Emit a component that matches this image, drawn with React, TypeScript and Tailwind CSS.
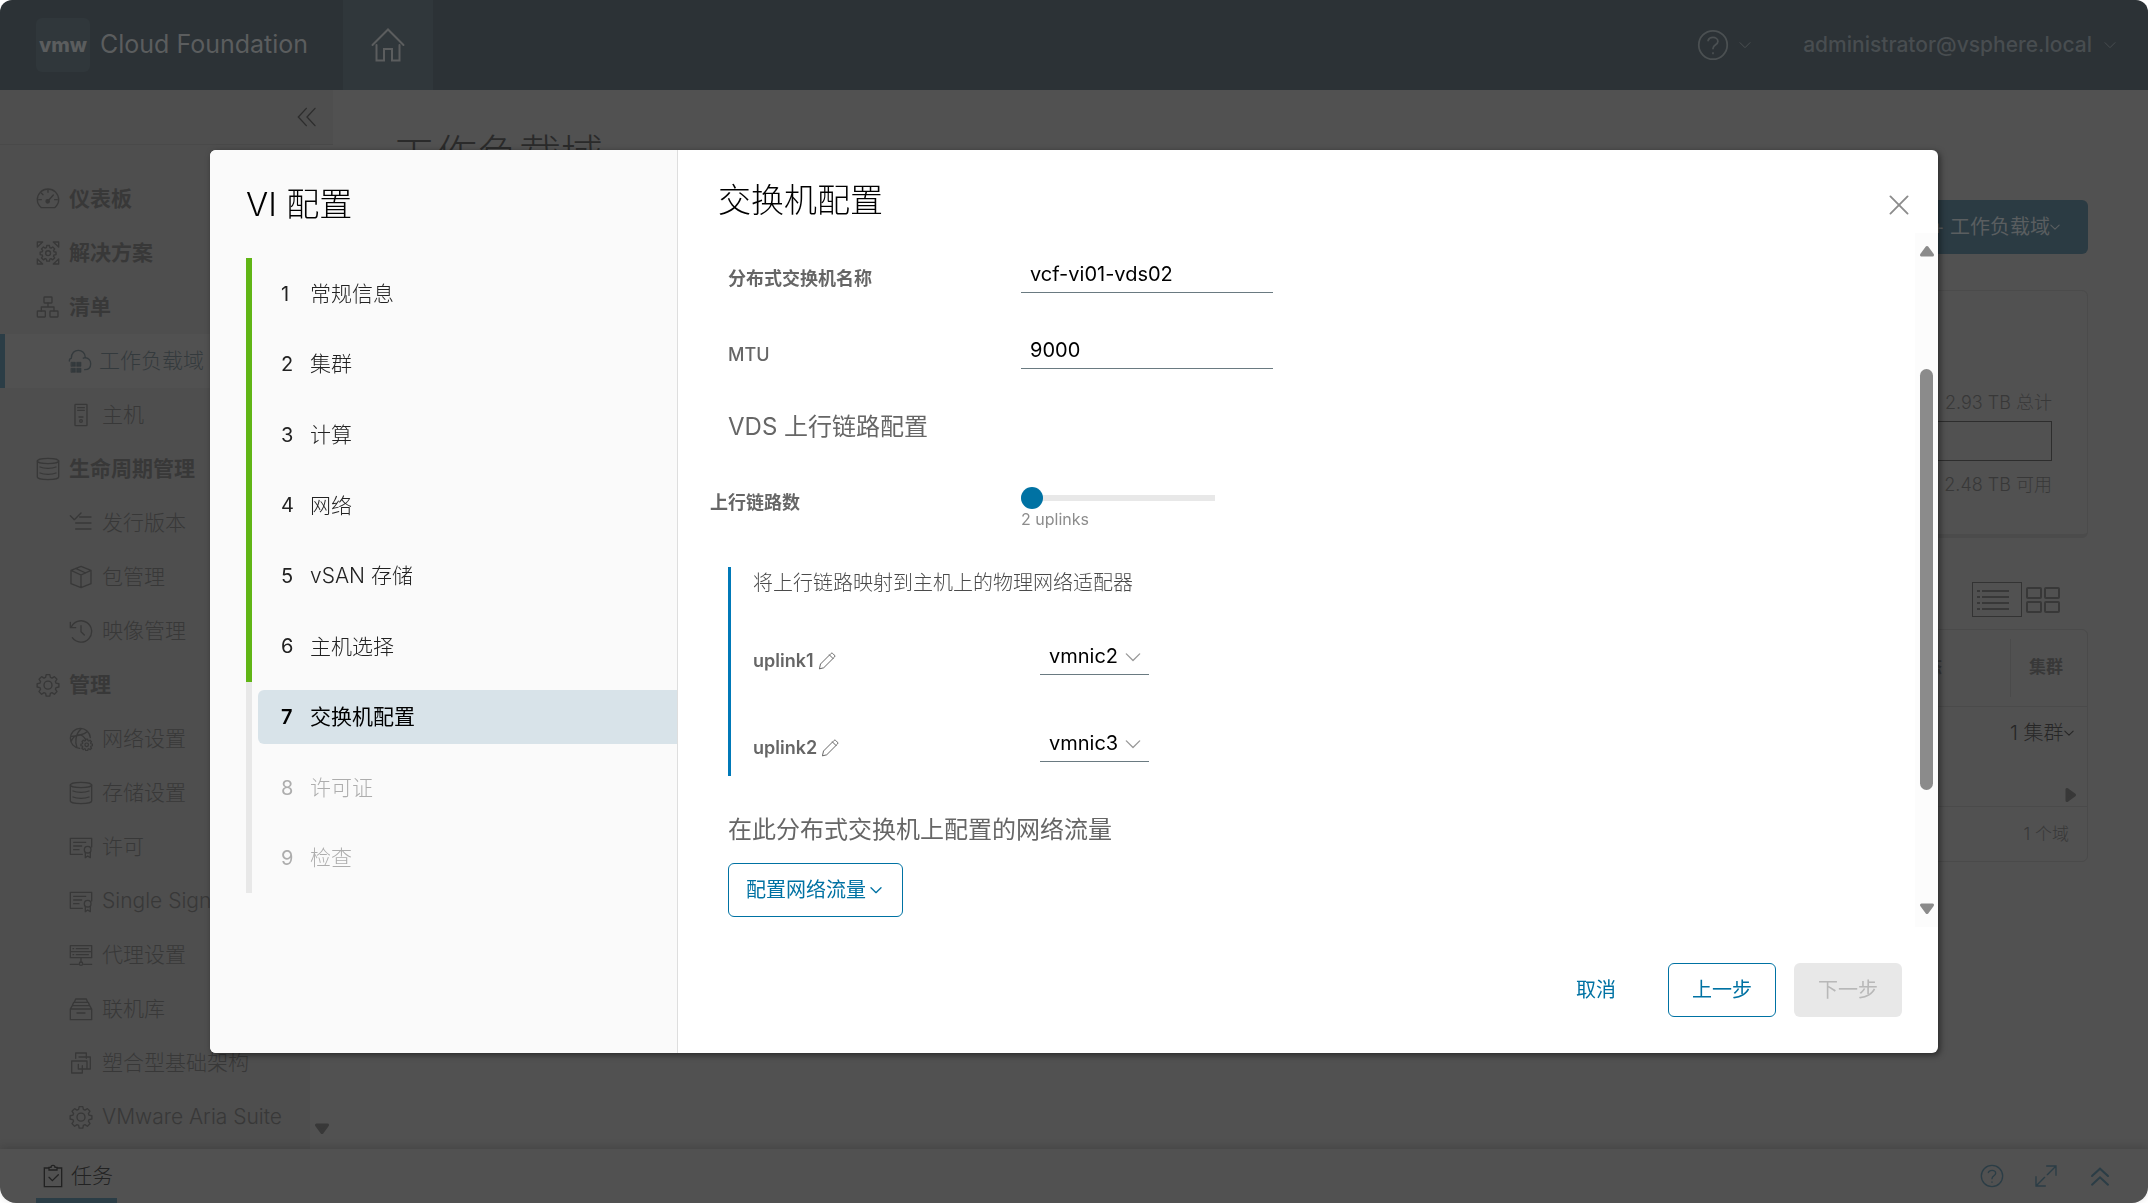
import { ReactNode, useState } from "react";

type IconProps = { className?: string; children?: ReactNode; w?: number };

/* Line icon on a 36-unit grid */
function Icon({ className = "size-6", children, w = 2 }: IconProps) {
  return (
    <svg
      viewBox="0 0 36 36"
      className={"shrink-0 " + className}
      fill="none"
      stroke="currentColor"
      strokeWidth={w}
      strokeLinejoin="round"
      strokeLinecap="round"
      aria-hidden="true"
    >
      {children}
    </svg>
  );
}

const GEAR =
  "M15.3 2.5h5.4l.9 4.2 2.4 1 3.6-2.3 3.9 3.9-2.4 3.6 1 2.4 4.2.8v4.9l-4.2.9-1 2.4 2.4 3.6-3.9 3.9-3.6-2.4-2.4 1-.9 4.2h-5.4l-.9-4.2-2.4-1-3.6 2.4-3.9-3.9 2.4-3.6-1-2.4-4.2-.9v-4.9l4.2-.8 1-2.4-2.4-3.6 3.9-3.9 3.6 2.3 2.4-1z";

function GearIcon({ className }: { className?: string }) {
  return (
    <Icon className={className}>
      <path d={GEAR} />
      <circle cx="18" cy="18.2" r="6" />
    </Icon>
  );
}

function GaugeIcon() {
  return (
    <Icon>
      <path d="M8 31C4.500 28 2 24 2 19a16 16 0 0 1 32 0c0 5-2.500 9-6 12z" />
      <path d="M18 4v4M4 19h4M28 19h4M8 9l2.500 2.500M18 21l8-9" />
      <circle cx="17.500" cy="21.500" r="2.500" fill="currentColor" />
    </Icon>
  );
}

function SolutionIcon() {
  return (
    <Icon>
      <path d="M2 9V1.500h8zM34 9V1.500h-8zM2 27v7.500h8zM34 27v7.500h-8z" />
      <g transform="translate(5 5) scale(.73)">
        <path d={GEAR} strokeWidth="2.800" />
        <circle cx="18" cy="18.200" r="5" strokeWidth="2.800" />
      </g>
    </Icon>
  );
}

function TreeIcon() {
  return (
    <Icon>
      <rect x="12" y="3" width="12" height="9" rx="1" />
      <rect x="2" y="24" width="12" height="9" rx="1" />
      <rect x="21" y="24" width="12" height="9" rx="1" />
      <path d="M18 12v6M8 24v-6h19v6" />
    </Icon>
  );
}

function CloudDomainIcon() {
  return (
    <Icon>
      <path d="M2 18c0-3 2-4 3-4C5 6 10 2 15.500 2S26 6 26 13c5 1 8 4 8 9s-3 9-9 9" />
      <path d="M26 13c-1 0-2 .3-3 .8" />
      <path
        d="M5 20h6v6H5zM13.500 20h6v6h-6zM5 29h6v6H5zM13.500 29h6v6h-6z"
        fill="currentColor"
        strokeWidth="1"
      />
    </Icon>
  );
}

function HostIcon() {
  return (
    <Icon>
      <rect x="9" y="2" width="18" height="32" rx="1" />
      <path d="M13 7h10M13 11h10M15 21h6" />
      <circle cx="18" cy="27" r="2" />
    </Icon>
  );
}

function DatabaseIcon() {
  return (
    <Icon>
      <ellipse cx="18" cy="6" rx="16" ry="4" />
      <path d="M2 6v24c0 2.200 7 4 16 4s16-1.800 16-4V6" />
      <path d="M6 15c3 1.300 7 2 12 2s9-.7 12-2M6 24c3 1.300 7 2 12 2s9-.7 12-2" />
    </Icon>
  );
}

function ReleaseIcon() {
  return (
    <Icon>
      <path d="M2 7l6 6L18 3M16 9h17M10 18h23M10 27h23" />
    </Icon>
  );
}

function BoxIcon() {
  return (
    <Icon>
      <path d="M18 2l15 6v20l-15 6-15-6V8zM3 8l15 7 15-7M18 15v19M10 5l15 7" />
    </Icon>
  );
}

function HistoryIcon() {
  return (
    <Icon>
      <path d="M2 5v8h8M3 13A16 16 0 1 1 5 28M18 10v9l5 5" />
    </Icon>
  );
}

function NetworkGearIcon() {
  return (
    <Icon>
      <path d="M16 32A15 15 0 1 1 32 16M12 31c-3-7-3-20 6-28M3 14c8 0 20-3 24-7M3 22c5-12 16-14 22-3" />
      <g transform="translate(17 17) scale(.53)">
        <path d={GEAR} strokeWidth="3.500" />
        <circle cx="18" cy="18.200" r="5" strokeWidth="3.500" />
      </g>
    </Icon>
  );
}

function CertificateIcon() {
  return (
    <Icon>
      <path d="M20 29H2V5h32v13M7 11h18M7 16.500h12M7 22h8" />
      <circle cx="28" cy="22" r="5" />
      <path d="M24.500 26v8l3.500-2.500 4 2.500v-8" />
    </Icon>
  );
}

function ProxyIcon() {
  return (
    <Icon>
      <path d="M2 4h32v18H2zM2 13h32M11 8.500h18M11 17.500h18M6 8.500h1M6 17.500h1M18 22v6M2 32h12M22 32h12" />
      <circle cx="18" cy="31" r="2.500" />
    </Icon>
  );
}

function DepotIcon() {
  return (
    <Icon>
      <path d="M2 18h32v16H2zM2 18l3-5h26l3 5M5 13l2-5h22l2 5M8 8l2-5h16l2 5M12 24h12" />
    </Icon>
  );
}

function BlocksIcon() {
  return (
    <Icon>
      <path d="M10 11V3h16v8M15 9h17v18H22M22 15H12M14 15H4v18h16V22M14 20v7h13V15h-4" />
    </Icon>
  );
}

function Chevron({ className = "size-4", w = 3 }: { className?: string; w?: number }) {
  return (
    <Icon className={className} w={w}>
      <path d="M3 11l15 15 15-15" />
    </Icon>
  );
}

function HelpIcon({ className }: { className?: string }) {
  return (
    <Icon className={className}>
      <circle cx="18" cy="18" r="16" />
      <path d="M12.500 13c.8-2.500 3-3.500 5.500-3.500 3 0 5.500 2 5.500 4.500 0 4-5.500 3.500-5.500 8M18 27v.5" />
    </Icon>
  );
}

function PencilIcon() {
  return (
    <Icon className="size-[18px]">
      <path d="M3 33l2-9L26 3c1-1 2.500-1 3.500 0L33 6.500c1 1 1 2.500 0 3.500L12 31zM23 6l7 7" />
    </Icon>
  );
}

function Triangle({ className }: { className: string }) {
  return (
    <svg viewBox="0 0 16 12" className={"h-3 w-4 shrink-0 " + className} fill="currentColor" stroke="currentColor" strokeWidth="3" strokeLinejoin="round" aria-hidden="true">
      <path d="M2.500 10h11L8 2.500z" />
    </svg>
  );
}

type NavEntry = { label: string; icon: ReactNode; group?: boolean; active?: boolean };

const NAV: NavEntry[] = [
  { label: "仪表板", icon: <GaugeIcon />, group: true },
  { label: "解决方案", icon: <SolutionIcon />, group: true },
  { label: "清单", icon: <TreeIcon />, group: true },
  { label: "工作负载域", icon: <CloudDomainIcon />, active: true },
  { label: "主机", icon: <HostIcon /> },
  { label: "生命周期管理", icon: <DatabaseIcon />, group: true },
  { label: "发行版本", icon: <ReleaseIcon /> },
  { label: "包管理", icon: <BoxIcon /> },
  { label: "映像管理", icon: <HistoryIcon /> },
  { label: "管理", icon: <GearIcon />, group: true },
  { label: "网络设置", icon: <NetworkGearIcon /> },
  { label: "存储设置", icon: <DatabaseIcon /> },
  { label: "许可", icon: <CertificateIcon /> },
  { label: "Single Sign-On", icon: <CertificateIcon /> },
  { label: "代理设置", icon: <ProxyIcon /> },
  { label: "联机库", icon: <DepotIcon /> },
  { label: "塑合型基础架构", icon: <BlocksIcon /> },
  { label: "VMware Aria Suite", icon: <GearIcon /> },
];

function TopBar() {
  return (
    <header className="flex h-[90px] shrink-0 items-center rounded-t-xl bg-[#2c3236] text-[#5b5d5e]">
      <div className="flex w-[343px] items-center gap-2.5 pl-9">
        <span className="flex size-[54px] items-center justify-center rounded-md bg-[#30373b] text-xl font-extrabold">
          vmw
        </span>
        <span className="text-[25px] whitespace-nowrap">Cloud Foundation</span>
      </div>
      <button aria-label="主页" className="flex h-full w-[90px] items-center justify-center bg-[#30373b]">
        <Icon className="size-9" w={2}>
          <path strokeLinejoin="miter" d="M2.500 18L18 2.500 33.500 18M6.500 18v15.500H14V22h8v11.500h7.500V18" />
        </Icon>
      </button>
      <button aria-label="帮助" className="ml-auto flex items-center gap-2.5 text-[#4b5052]">
        <HelpIcon className="size-8" />
        <Chevron className="size-3" />
      </button>
      <button className="mr-8 ml-[52px] flex items-center gap-3 text-[21px] font-medium text-[#484d50]">
        administrator@vsphere.local
        <Chevron className="size-3" />
      </button>
    </header>
  );
}

function Sidebar() {
  return (
    <aside className="flex w-[333px] shrink-0 flex-col bg-[#515151] text-[#383838]">
      <div className="flex h-[55px] shrink-0 items-center justify-end border-b border-[#494949] bg-[#4e4e4e] pr-3.5 text-[#2d2d2d]">
        <button aria-label="折叠">
          <Icon className="size-6" w={2}>
            <path strokeLinejoin="miter" d="M17 5L5 18l12 13M30 5L18 18l12 13" />
          </Icon>
        </button>
      </div>
      <div className="flex min-h-0 flex-1">
        <nav className="min-w-0 flex-1 overflow-hidden bg-[#4e4e4e] pt-[27px]">
          {NAV.map((n) =>
            n.group ? (
              <a key={n.label} href="#" className="flex h-[54px] items-center gap-[9px] pl-9 text-[21px] font-bold">
                {n.icon}
                {n.label}
              </a>
            ) : n.active ? (
              <a key={n.label} href="#" className="flex h-[54px] items-center gap-[7px] border-l-5 border-[#2b3d46] bg-[#515151] pl-[63px] text-[21px] font-light text-[#343a3d]">
                {n.icon}
                {n.label}
              </a>
            ) : (
              <a key={n.label} href="#" className="flex h-[54px] items-center gap-[9px] pl-[69px] text-[21px] font-light whitespace-nowrap">
                {n.icon}
                {n.label}
              </a>
            ),
          )}
        </nav>
        <div className="flex w-[23px] items-end justify-center pb-3.5">
          <Triangle className="rotate-180" />
        </div>
      </div>
    </aside>
  );
}

function DomainPage() {
  return (
    <main className="flex min-w-0 flex-1 flex-col pr-[60px] pl-[60px] text-[#383838]">
      <h1 className="mt-[38px] text-[42px] leading-[54px] font-light text-[#2a2a2a]">工作负载域</h1>
      <div className="mt-[18px] flex justify-end">
        <button className="flex h-[54px] items-center rounded-md bg-[#2b3b43] px-7 text-xl text-[#5a5e60]">
          + 工作负载域
          <Chevron className="size-2.5" w={4} />
        </button>
      </div>
      <section className="mt-9 h-[248px] rounded-md border border-b-4 border-[#4b4b4b] px-[35px] pt-[98px] text-right text-lg font-light">
        <p className="leading-7">2.93 TB 总计</p>
        <div className="my-1 h-10 border border-[#2d2d2d]" />
        <p className="leading-10">2.48 TB 可用</p>
      </section>
      <div className="mt-11 flex items-center justify-end gap-1 pr-7">
        <button aria-label="列表视图" className="flex h-[35px] w-[50px] items-center border border-[#333] pl-1">
          <svg viewBox="0 0 32 22" className="h-[22px] w-8" stroke="currentColor" strokeWidth="2" aria-hidden="true">
            <path d="M0 2h3M5 2h27M0 8h3M5 8h27M0 14h3M5 14h27M0 20h3M5 20h27" />
          </svg>
        </button>
        <button aria-label="卡片视图">
          <svg viewBox="0 0 34 26" className="h-[26px] w-[34px]" fill="none" stroke="currentColor" strokeWidth="2" aria-hidden="true">
            <rect x="1" y="1" width="14" height="10" rx="1" />
            <rect x="19" y="1" width="14" height="10" rx="1" />
            <rect x="1" y="15" width="14" height="10" rx="1" />
            <rect x="19" y="15" width="14" height="10" rx="1" />
          </svg>
        </button>
      </div>
      <div className="mt-3 rounded-md border border-[#4a4a4a]">
        <table className="w-full">
          <thead>
            <tr className="h-[76px] border-b border-[#4a4a4a] text-[17px]">
              <th className="pr-[68px] text-right font-bold">状态</th>
              <th className="w-[77px] p-0 font-bold">
                <span className="flex h-[58px] items-center border-l border-[#4a4a4a] pl-[18px]">集群</span>
              </th>
            </tr>
          </thead>
          <tbody>
            <tr className="border-b border-[#4a4a4a] text-[#262626]">
              <td />
              <td className="h-[100px] p-0 align-top">
                <button className="flex h-[52px] items-center text-xl font-light whitespace-nowrap">
                  1 集群
                  <Chevron className="size-2.5" w={4} />
                </button>
                <div className="flex justify-end pt-[30px] pr-2 text-[#383838]">
                  <Triangle className="rotate-90" />
                </div>
              </td>
            </tr>
          </tbody>
        </table>
        <p className="pr-[18px] text-right text-[17px] leading-[54px] font-light">1 个域</p>
      </div>
    </main>
  );
}

function TaskBar() {
  return (
    <footer className="flex h-[54px] shrink-0 items-center rounded-b-2xl bg-[#515151] pr-9 pl-9 shadow-[0_-2px_8px_rgba(0,0,0,0.15)]">
      <button className="flex h-full items-center gap-1.5 border-b-5 border-[#2b3d46] pt-1 pr-1 pl-[5px] text-[21px] font-light text-[#222]">
        <Icon className="size-6">
          <path strokeLinejoin="miter" d="M12 6H5v28h26V6h-7M12 9V5h3c0-4 6-4 6 0h3v4zM12 20l5 5 9-9" />
        </Icon>
        任务
      </button>
      <div className="ml-auto flex gap-[30px] text-[#2b3d46]">
        <button aria-label="帮助">
          <HelpIcon className="size-6" />
        </button>
        <button aria-label="展开">
          <Icon className="size-6">
            <path strokeLinejoin="miter" d="M19 3h14v14M33 3L20 16M17 33H3V19M3 33l13-13" />
          </Icon>
        </button>
        <button aria-label="向上">
          <Icon className="size-6" w={3}>
            <path strokeLinejoin="miter" d="M6 18L18 7l12 11M6 31l12-11 12 11" />
          </Icon>
        </button>
      </div>
    </footer>
  );
}

const STEPS = ["常规信息", "集群", "计算", "网络", "vSAN 存储", "主机选择", "交换机配置", "许可证", "检查"];
const CURRENT = 6;

function StepList() {
  return (
    <ol className="mt-[34px] grid h-[635px] auto-rows-fr">
      {STEPS.map((s, i) => (
        <li key={s} className={i < CURRENT ? "flex items-center border-l-6 border-[#60b515] pl-1.5" : "flex items-center border-l-6 border-[#e8e8e8] pl-1.5"}>
          <button
            disabled={i > CURRENT}
            aria-current={i === CURRENT ? "step" : undefined}
            className={
              i === CURRENT
                ? "flex h-[54px] w-full items-center rounded-l-md bg-[#d8e3e9] pl-[23px] text-[21px] text-black"
                : i < CURRENT
                  ? "flex h-[54px] w-full items-center pl-[23px] text-[21px] font-light text-[#222]"
                  : "flex h-[54px] w-full items-center pl-[23px] text-[21px] font-light text-[#adadad]"
            }
          >
            <span className={i === CURRENT ? "w-[29px] text-left text-xl font-semibold" : "w-[29px] text-left text-xl font-normal"}>{i + 1}</span>
            {s}
          </button>
        </li>
      ))}
    </ol>
  );
}

const LABEL = "text-lg leading-7 font-bold text-[#666]";
const TEXT_INPUT = "h-9 w-[252px] border-b border-[#6a7a81] bg-transparent px-[9px] pb-0.5 text-xl text-black outline-none";

function UplinkRow({ name, value, onChange }: { name: string; value: string; onChange: (v: string) => void }) {
  return (
    <div className="grid grid-cols-[287px_109px] items-end">
      <div className="flex items-center gap-1 text-[#666]">
        <label htmlFor={name} className="text-lg leading-7 font-semibold">
          {name}
        </label>
        <button aria-label={"编辑 " + name}>
          <PencilIcon />
        </button>
      </div>
      <div className="relative">
        <select
          id={name}
          value={value}
          onChange={(e) => onChange(e.target.value)}
          className="h-9 w-full appearance-none border-b border-[#6a7a81] bg-transparent pb-0.5 pl-[9px] text-xl text-black outline-none"
        >
          <option>vmnic2</option>
          <option>vmnic3</option>
        </select>
        <Chevron className="pointer-events-none absolute top-2.5 right-2 size-4 text-[#999]" />
      </div>
    </div>
  );
}

function SwitchForm() {
  const [name, setName] = useState("vcf-vi01-vds02");
  const [mtu, setMtu] = useState("9000");
  const [count, setCount] = useState(2);
  const [nic1, setNic1] = useState("vmnic2");
  const [nic2, setNic2] = useState("vmnic3");
  return (
    <form className="min-w-0 flex-1 overflow-hidden pt-6 pl-8">
      <div className="grid grid-cols-[293px_1fr] items-end pl-[18px]">
        <label htmlFor="vds-name" className={LABEL}>分布式交换机名称</label>
        <input id="vds-name" value={name} onChange={(e) => setName(e.target.value)} className={TEXT_INPUT} />
      </div>
      <div className="mt-10 grid grid-cols-[293px_1fr] items-end pl-[18px]">
        <label htmlFor="mtu" className="text-lg leading-7 font-medium text-[#666]">MTU</label>
        <input id="mtu" value={mtu} onChange={(e) => setMtu(e.target.value)} className={TEXT_INPUT} />
      </div>
      <h3 className="mt-10 pl-[18px] text-2xl leading-9 font-normal text-[#666]">VDS 上行链路配置</h3>
      <div className="mt-10 grid grid-cols-[311px_1fr]">
        <label htmlFor="uplinks" className="text-lg leading-9 font-bold text-[#666]">上行链路数</label>
        <div>
          <input
            id="uplinks"
            type="range"
            min={2}
            max={8}
            value={count}
            onChange={(e) => setCount(Number(e.target.value))}
            className="block h-[26px] w-[194px] appearance-none bg-transparent [&::-webkit-slider-runnable-track]:h-1.5 [&::-webkit-slider-runnable-track]:bg-[#e8e8e8] [&::-webkit-slider-thumb]:-mt-2 [&::-webkit-slider-thumb]:size-[22px] [&::-webkit-slider-thumb]:appearance-none [&::-webkit-slider-thumb]:rounded-full [&::-webkit-slider-thumb]:bg-[#0072a3]"
          />
          <p className="text-base leading-4 text-[#8c8c8c]">{count} uplinks</p>
        </div>
      </div>
      <div className="mt-10 ml-[18px] border-l-3 border-[#0079b8] pb-3.5 pl-[22px]">
        <p className="text-xl leading-8 font-light text-[#4a4a4a]">将上行链路映射到主机上的物理网络适配器</p>
        <div className="mt-10 grid gap-[51px]">
          <UplinkRow name="uplink1" value={nic1} onChange={setNic1} />
          <UplinkRow name="uplink2" value={nic2} onChange={setNic2} />
        </div>
      </div>
      <h3 className="mt-9 pl-[18px] text-2xl leading-9 font-normal text-[#666]">在此分布式交换机上配置的网络流量</h3>
      <button
        type="button"
        className="mt-[15px] ml-[18px] flex h-[54px] items-center gap-1 rounded-md border border-[#0072a3] pr-5 pl-[17px] text-xl text-[#0072a3]"
      >
        配置网络流量
        <Chevron className="size-3" w={4} />
      </button>
    </form>
  );
}

function Wizard() {
  return (
    <div role="dialog" aria-label="VI 配置" className="flex h-[75vh] w-full max-w-[1728px] overflow-hidden rounded-md bg-white shadow-[2px_2px_6px_rgba(0,0,0,0.5)]">
      <div className="w-[468px] shrink-0 border-r border-[#dedede] bg-[#fafafa] pt-[34px] pl-9">
        <h2 className="text-[33px] leading-10 font-light text-black">VI 配置</h2>
        <StepList />
      </div>
      <div className="flex min-w-0 flex-1 flex-col">
        <div className="flex h-[83px] shrink-0 items-start justify-between pt-[30px] pr-7 pl-10">
          <h2 className="text-[33px] leading-10 font-light text-black">交换机配置</h2>
          <button aria-label="关闭" className="mt-3.5 text-[#8c8c8c]">
            <Icon className="size-[22px]" w={3}>
              <path d="M4 4l28 28M32 4L4 32" />
            </Icon>
          </button>
        </div>
        <div className="flex min-h-0 flex-1">
          <SwitchForm />
          <div className="flex w-[23px] flex-col items-center justify-between bg-[#fcfcfc] py-3 text-[#8b8b8b]">
            <Triangle className="" />
            <div className="mt-28 mb-auto h-[421px] w-[13px] rounded-full bg-[#8b8b8b]" />
            <Triangle className="rotate-180" />
          </div>
        </div>
        <div className="flex shrink-0 justify-end gap-[18px] py-9 pr-9 text-xl">
          <button className="mr-2.5 h-[54px] px-6 text-[#0072a3]">取消</button>
          <button className="h-[54px] rounded-md border border-[#0072a3] px-[23px] text-[#0072a3]">上一步</button>
          <button disabled className="h-[54px] rounded-md bg-[#e8e8e8] px-6 text-[#b8b8b8]">下一步</button>
        </div>
      </div>
    </div>
  );
}

export default function App() {
  return (
    <div className='flex h-screen flex-col overflow-hidden bg-white font-["Inter","Noto_Sans_CJK_SC",sans-serif]'>
      <TopBar />
      <div className="flex min-h-0 flex-1 overflow-hidden bg-[#515151]">
        <Sidebar />
        <DomainPage />
      </div>
      <TaskBar />
      <div className="fixed inset-0 flex items-center justify-center">
        <Wizard />
      </div>
    </div>
  );
}
